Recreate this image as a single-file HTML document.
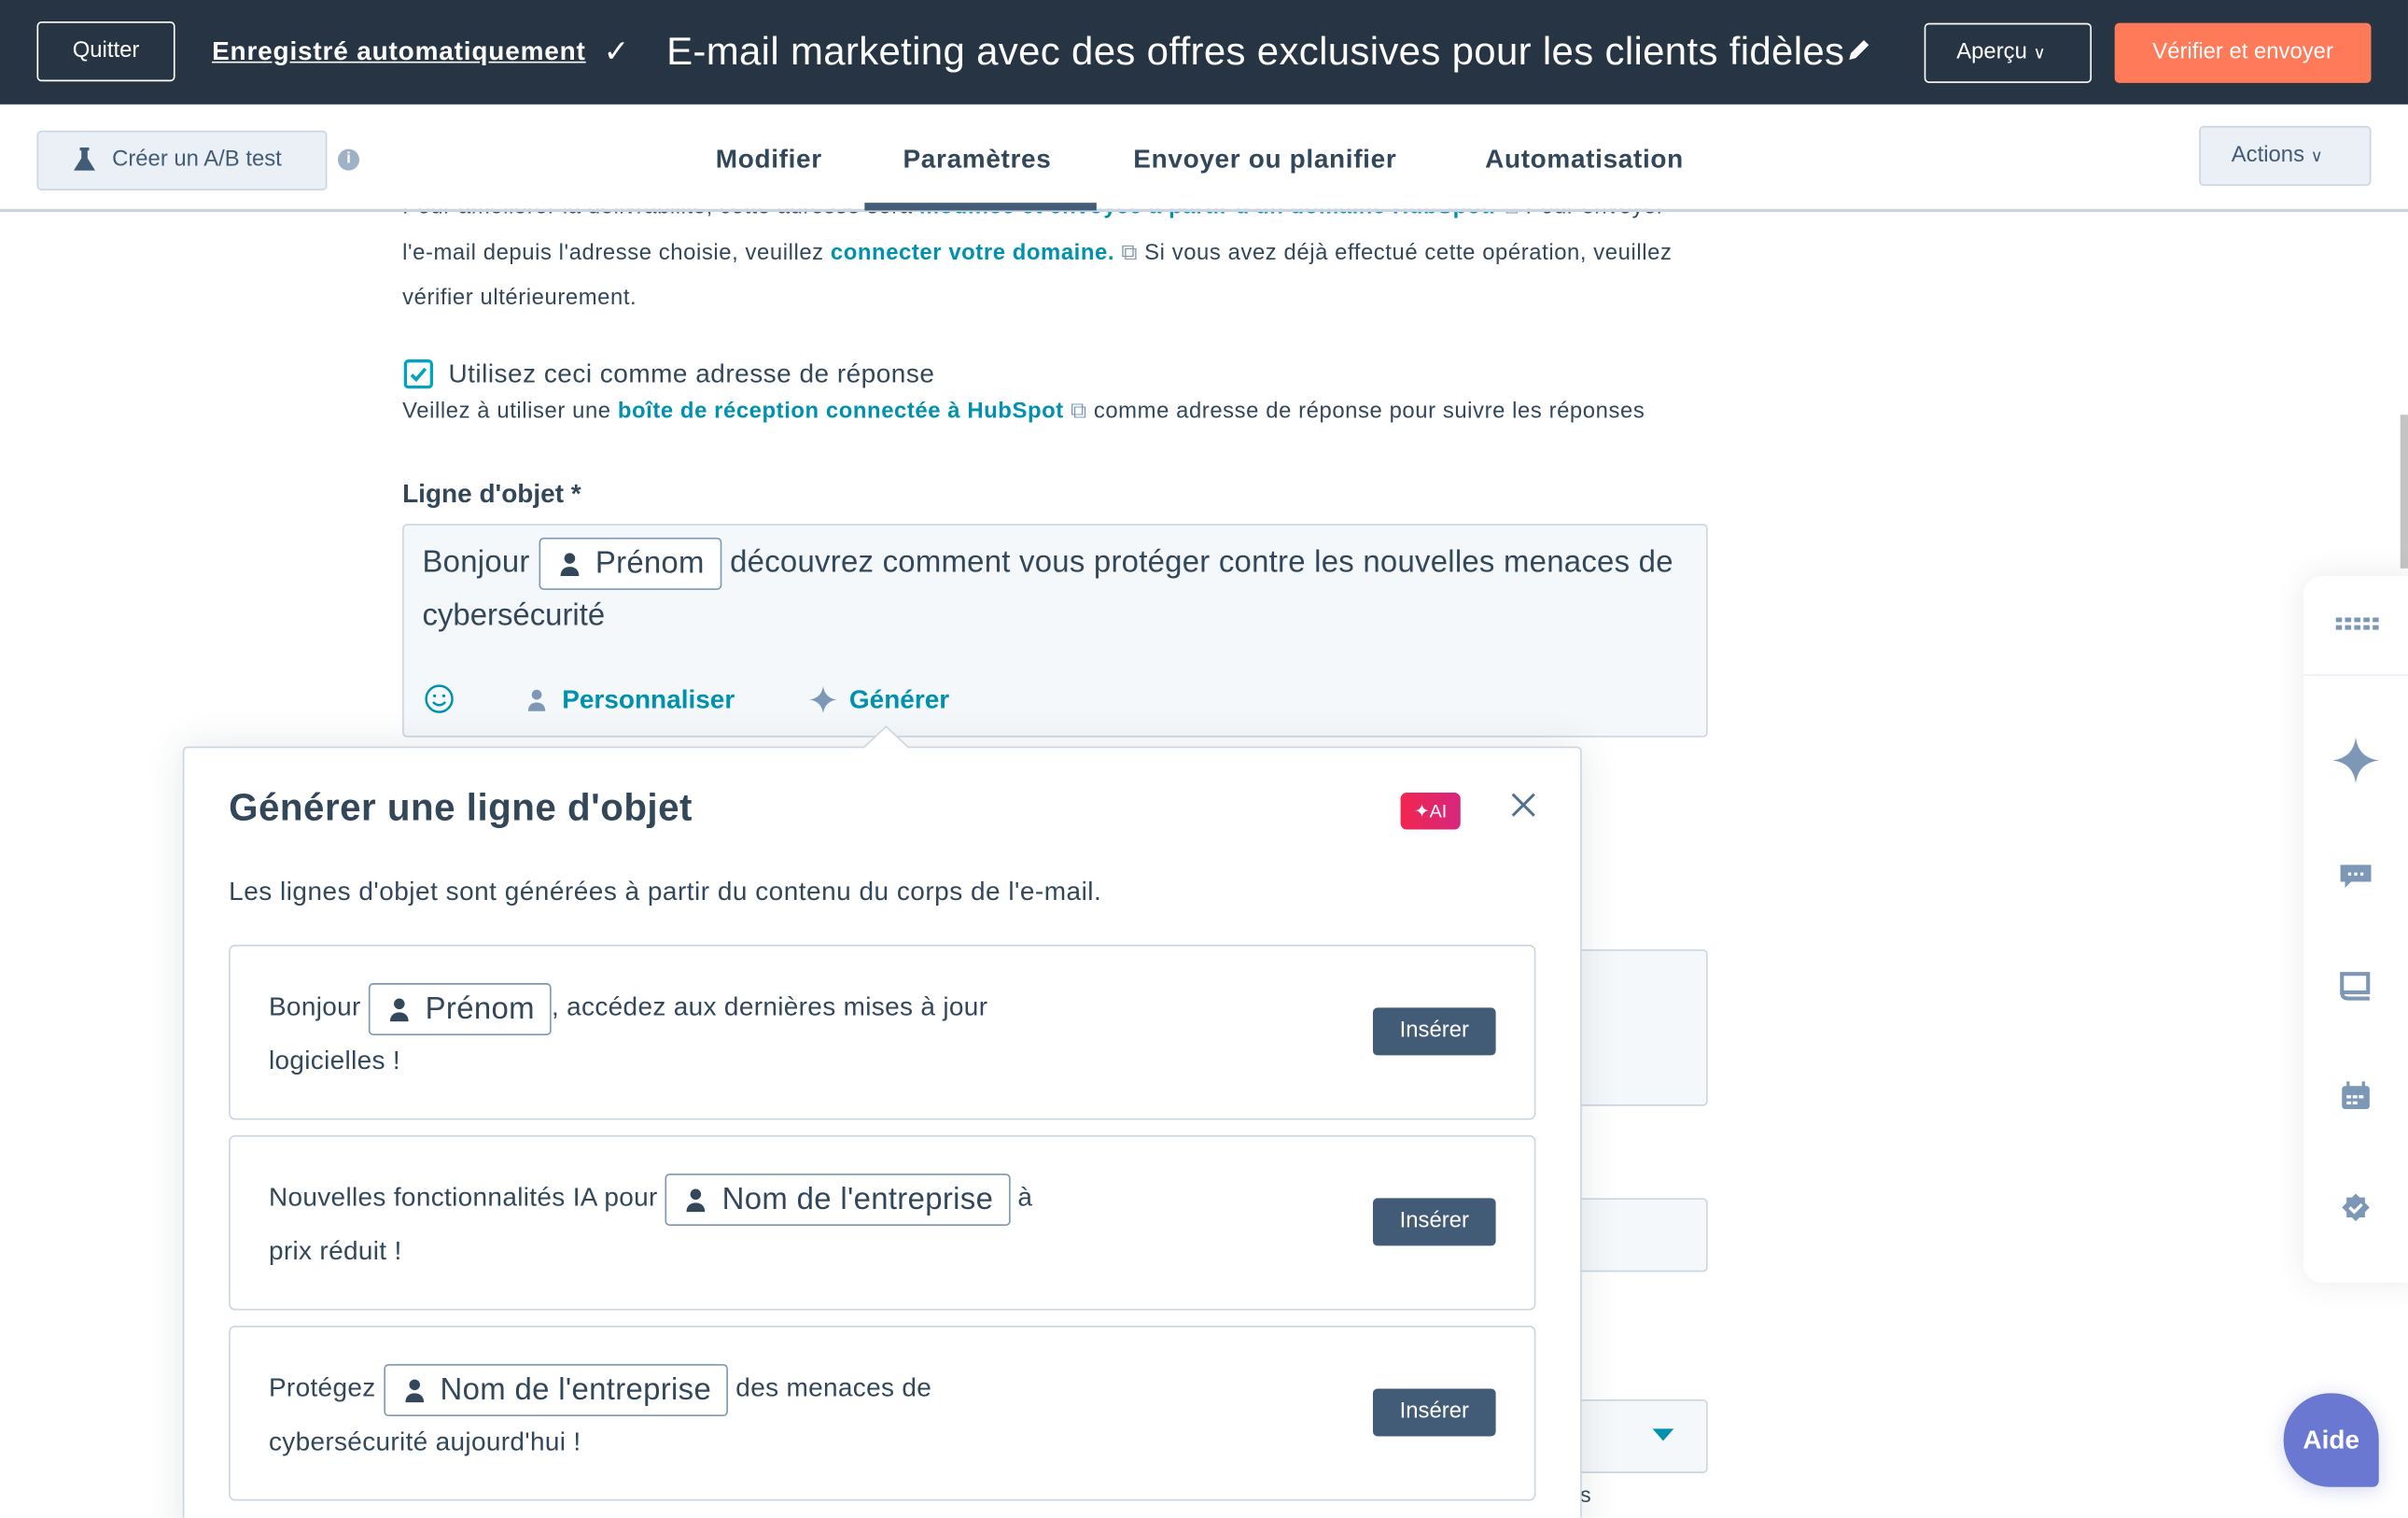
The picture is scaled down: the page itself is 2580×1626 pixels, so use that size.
<!DOCTYPE html>
<html><head><meta charset="utf-8"><style>
*{box-sizing:border-box;margin:0;padding:0}
html,body{width:2580px;height:1625px;overflow:hidden;background:#fff}
#w{position:absolute;left:0;top:0;width:1568px;height:988px;transform:scale(1.6454);transform-origin:0 0;font-family:"Liberation Sans",sans-serif;color:#33475b;overflow:hidden}
.a{position:absolute;white-space:nowrap}
.lk{color:#0091ae;font-weight:bold}
.btn{position:absolute;background:#425b76;color:#fff;font-size:14.5px;border-radius:3px;width:80px;height:31px;line-height:31px;text-align:center}
.card{position:absolute;left:149px;width:851px;height:114px;border:1px solid #cbd6e2;border-radius:4px;background:#fff}
.tok{display:inline-block;border:1px solid #7c98b6;border-radius:3px;background:#fff;padding:0 10px 0 12px;height:34px;line-height:32px;font-size:20px;vertical-align:middle}
.tok svg{vertical-align:-2px;margin-right:10px}
.ct{position:absolute;left:25px;font-size:17px;line-height:34px;width:520px;white-space:normal;letter-spacing:.2px}
.sm{font-size:14.5px;letter-spacing:.35px}
</style></head><body><div id="w">
<div class="a" style="left:0;top:0;width:1568px;height:68px;background:#273444"></div>
<div class="a" style="left:24px;top:14px;width:90px;height:39px;border:1px solid #fff;border-radius:3px;color:#fff;font-size:14.5px;text-align:center;line-height:37px">Quitter</div>
<div class="a" style="left:138px;top:24px;color:#fff;font-size:17px;font-weight:bold;text-decoration:underline;letter-spacing:.5px">Enregistré automatiquement</div>
<div class="a" style="left:393px;top:21px;color:#fff;font-size:20px">✓</div>
<div class="a" style="left:434px;top:20px;color:#fff;font-size:25.5px;letter-spacing:.2px">E-mail marketing avec des offres exclusives pour les clients fidèles</div>
<svg class="a" style="left:1202px;top:24px" width="17" height="17" viewBox="0 0 16 16"><path d="M2 14l1-4 8-8 3 3-8 8z" fill="#fff"/></svg>
<div class="a" style="left:1253px;top:15px;width:109px;height:39px;border:1px solid #fff;border-radius:3px;color:#fff;font-size:14.5px;line-height:37px;padding-left:20px">Aperçu <span style="font-size:11px">&#8744;</span></div>
<div class="a" style="left:1377px;top:15px;width:167px;height:39px;background:#ff7a59;border-radius:3px;color:#fff;font-size:14.5px;line-height:39px;text-align:center">Vérifier et envoyer</div>
<div class="a" style="left:0;top:136px;width:1568px;height:2px;background:#cbd6e2;z-index:3"></div>
<div class="a" style="left:0;top:68px;width:1568px;height:68px;background:#fff;z-index:2"></div>
<div class="a" style="z-index:3;left:24px;top:85px;width:189px;height:39px;background:#eaf0f6;border:1px solid #cbd6e2;border-radius:3px;font-size:14.5px;color:#425b76;line-height:37px;padding-left:48px">Créer un A/B test</div>
<svg class="a" style="z-index:4;left:47px;top:95px" width="16" height="17" viewBox="0 0 16 17"><path d="M5 1h6v2h-1v5l5 8H1l5-8V3H5z" fill="#425b76"/></svg>
<div class="a" style="z-index:3;left:220px;top:97px;width:14px;height:14px;border-radius:50%;background:#9fb1c5;color:#fff;font-size:10px;font-weight:bold;text-align:center;line-height:14px">i</div>
<div class="a" style="z-index:3;left:466px;top:94px;font-size:17px;font-weight:bold;letter-spacing:.4px">Modifier</div>
<div class="a" style="z-index:3;left:588px;top:94px;font-size:17px;font-weight:bold;letter-spacing:.4px">Paramètres</div>
<div class="a" style="z-index:3;left:738px;top:94px;font-size:17px;font-weight:bold;letter-spacing:.4px">Envoyer ou planifier</div>
<div class="a" style="z-index:3;left:967px;top:94px;font-size:17px;font-weight:bold;letter-spacing:.4px">Automatisation</div>
<div class="a" style="z-index:4;left:563px;top:132px;width:151px;height:5px;background:#425b76"></div>
<div class="a" style="z-index:3;left:1432px;top:82px;width:112px;height:39px;background:#eaf0f6;border:1px solid #cbd6e2;border-radius:3px;font-size:14.5px;color:#425b76;line-height:37px;padding-left:20px">Actions <span style="font-size:11px">&#8744;</span></div>
<div class="a sm" style="left:262px;top:127px">Pour améliorer la délivrabilité, cette adresse sera <span class="lk">modifiée et envoyée à partir d'un domaine HubSpot.</span> <span style="color:#7c98b6">⧉</span> Pour envoyer</div>
<div class="a sm" style="left:262px;top:157px">l'e-mail depuis l'adresse choisie, veuillez <span class="lk">connecter votre domaine.</span> <span style="color:#7c98b6">⧉</span> Si vous avez déjà effectué cette opération, veuillez</div>
<div class="a sm" style="left:262px;top:186px">vérifier ultérieurement.</div>
<div class="a" style="left:263px;top:234px;width:19px;height:19px;border:2px solid #00a4bd;border-radius:3px"></div>
<svg class="a" style="left:266px;top:237px" width="13" height="13" viewBox="0 0 13 13"><path d="M2 7l3 3 6-7" stroke="#00a4bd" stroke-width="2.2" fill="none"/></svg>
<div class="a" style="left:292px;top:234px;font-size:17px;letter-spacing:.3px">Utilisez ceci comme adresse de réponse</div>
<div class="a sm" style="left:262px;top:260px">Veillez à utiliser une <span class="lk">boîte de réception connectée à HubSpot</span> <span style="color:#7c98b6">⧉</span> comme adresse de réponse pour suivre les réponses</div>
<div class="a" style="left:262px;top:312px;font-size:17px;font-weight:bold">Ligne d'objet *</div>
<div class="a" style="left:262px;top:341px;width:850px;height:139px;background:#f5f8fa;border:1px solid #cbd6e2;border-radius:3px"></div>
<div class="a" style="left:275px;top:350px;font-size:20px;letter-spacing:.15px">Bonjour <span class="tok"><svg width="14" height="16" viewBox="0 0 14 16"><circle cx="7" cy="4.5" r="3.5" fill="#33475b"/><path d="M1 16c0-4 2.5-6 6-6s6 2 6 6z" fill="#33475b"/></svg>Prénom</span> découvrez comment vous protéger contre les nouvelles menaces de</div>
<div class="a" style="left:275px;top:390px;font-size:20px">cybersécurité</div>
<svg class="a" style="left:276px;top:445px" width="20" height="20" viewBox="0 0 20 20"><circle cx="10" cy="10" r="8.5" stroke="#0091ae" stroke-width="1.5" fill="none"/><circle cx="7" cy="8" r="1" fill="#0091ae"/><circle cx="13" cy="8" r="1" fill="#0091ae"/><path d="M6 12q4 4 8 0" stroke="#0091ae" stroke-width="1.5" fill="none"/></svg>
<svg class="a" style="left:343px;top:447px" width="13" height="17" viewBox="0 0 14 16"><circle cx="7" cy="4.5" r="3.5" fill="#7c98b6"/><path d="M1 16c0-4 2.5-6 6-6s6 2 6 6z" fill="#7c98b6"/></svg>
<div class="a lk" style="left:366px;top:446px;font-size:17px">Personnaliser</div>
<svg class="a" style="left:527px;top:446px" width="18" height="19" viewBox="0 0 18 18"><path d="M9 0Q10 8 18 9Q10 10 9 18Q8 10 0 9Q8 8 9 0z" fill="#7c98b6"/></svg>
<div class="a lk" style="left:553px;top:446px;font-size:17px">Générer</div>
<div class="a" style="left:1000px;top:618px;width:112px;height:102px;background:#f5f8fa;border:1px solid #cbd6e2;border-radius:3px"></div>
<div class="a" style="left:1000px;top:780px;width:112px;height:48px;background:#f5f8fa;border:1px solid #cbd6e2;border-radius:3px"></div>
<div class="a" style="left:1000px;top:911px;width:112px;height:48px;background:#f5f8fa;border:1px solid #cbd6e2;border-radius:3px"></div>
<svg class="a" style="left:1076px;top:930px" width="14" height="9"><path d="M0 0h14L7 8z" fill="#0091ae"/></svg>
<div class="a" style="left:1029px;top:965px;font-size:14px">s</div>
<div class="a" style="left:119px;top:486px;width:911px;height:520px;background:#fff;border:1px solid #cbd6e2;border-radius:3px;box-shadow:0 0 25px rgba(45,62,80,.12)"></div>
<svg class="a" style="left:562px;top:472px" width="30" height="16"><path d="M0 15L15 1L30 15" fill="#fff" stroke="#cbd6e2"/><rect x="0" y="15" width="30" height="2" fill="#fff"/></svg>
<div class="a" style="left:149px;top:513px;font-size:24.5px;font-weight:bold;letter-spacing:.3px">Générer une ligne d'objet</div>
<div class="a" style="left:912px;top:516px;width:39px;height:24px;border-radius:4px;background:linear-gradient(90deg,#f2254f,#d6277e);color:#fff;font-size:12px;text-align:center;line-height:24px">✦AI</div>
<svg class="a" style="left:984px;top:516px" width="16" height="16"><path d="M1 1L15 15M15 1L1 15" stroke="#516f90" stroke-width="1.8"/></svg>
<div class="a" style="left:149px;top:571px;font-size:17px;letter-spacing:.3px">Les lignes d'objet sont générées à partir du contenu du corps de l'e-mail.</div>
<div class="card" style="top:615px"><div class="ct" style="top:23px">Bonjour <span class="tok"><svg width="14" height="16" viewBox="0 0 14 16"><circle cx="7" cy="4.5" r="3.5" fill="#33475b"/><path d="M1 16c0-4 2.5-6 6-6s6 2 6 6z" fill="#33475b"/></svg>Prénom</span>, accédez aux dernières mises à jour logicielles !</div><div class="btn" style="left:744px;top:40px">Insérer</div></div>
<div class="card" style="top:739px"><div class="ct" style="top:23px;width:525px">Nouvelles fonctionnalités IA pour <span class="tok"><svg width="14" height="16" viewBox="0 0 14 16"><circle cx="7" cy="4.5" r="3.5" fill="#33475b"/><path d="M1 16c0-4 2.5-6 6-6s6 2 6 6z" fill="#33475b"/></svg>Nom de l'entreprise</span> à<br>prix réduit !</div><div class="btn" style="left:744px;top:40px">Insérer</div></div>
<div class="card" style="top:863px"><div class="ct" style="top:23px">Protégez <span class="tok"><svg width="14" height="16" viewBox="0 0 14 16"><circle cx="7" cy="4.5" r="3.5" fill="#33475b"/><path d="M1 16c0-4 2.5-6 6-6s6 2 6 6z" fill="#33475b"/></svg>Nom de l'entreprise</span> des menaces de cybersécurité aujourd'hui !</div><div class="btn" style="left:744px;top:40px">Insérer</div></div>
<div class="a" style="left:1563px;top:270px;width:5px;height:100px;background:#c4c4c4"></div>
<div class="a" style="left:1500px;top:375px;width:80px;height:460px;background:#fff;border-radius:12px;box-shadow:0 0 20px rgba(45,62,80,.1)"></div>
<div class="a" style="left:1500px;top:439px;width:68px;height:1px;background:#eaf0f6"></div>
<svg class="a" style="left:1521px;top:402px" width="28" height="10"><g fill="#7c98b6"><rect x="0" y="0" width="4" height="3"/><rect x="6" y="0" width="4" height="3"/><rect x="12" y="0" width="4" height="3"/><rect x="18" y="0" width="4" height="3"/><rect x="24" y="0" width="4" height="3"/><rect x="0" y="5" width="4" height="3"/><rect x="6" y="5" width="4" height="3"/><rect x="12" y="5" width="4" height="3"/><rect x="18" y="5" width="4" height="3"/><rect x="24" y="5" width="4" height="3"/></g></svg>
<svg class="a" style="left:1519px;top:480px" width="30" height="30" viewBox="0 0 18 18"><path d="M9 0Q10 8 18 9Q10 10 9 18Q8 10 0 9Q8 8 9 0z" fill="#7c98b6"/></svg>
<svg class="a" style="left:1523px;top:562px" width="22" height="18"><path d="M1 1h20v11H8l-4 4v-4H1z" fill="#7c98b6"/><g fill="#fff"><rect x="6" y="6" width="2" height="2"/><rect x="10" y="6" width="2" height="2"/><rect x="14" y="6" width="2" height="2"/></g></svg>
<svg class="a" style="left:1523px;top:632px" width="22" height="20"><path d="M2 2h17v12H2z M2 14q0 4 4 4h14" fill="none" stroke="#7c98b6" stroke-width="2.5"/></svg>
<svg class="a" style="left:1524px;top:703px" width="20" height="20"><rect x="1" y="4" width="18" height="15" rx="2" fill="#7c98b6"/><rect x="4" y="1" width="2" height="4" fill="#7c98b6"/><rect x="14" y="1" width="2" height="4" fill="#7c98b6"/><g fill="#fff"><rect x="4" y="10" width="3" height="2"/><rect x="8" y="10" width="3" height="2"/><rect x="12" y="10" width="3" height="2"/><rect x="4" y="14" width="3" height="2"/><rect x="8" y="14" width="3" height="2"/></g></svg>
<svg class="a" style="left:1524px;top:776px" width="20" height="20" viewBox="0 0 20 20"><path d="M10 1l2.5 2.5H16v3.5L19 10l-3 3v3.5h-3.5L10 19l-2.5-2.5H4V13L1 10l3-3V3.5h3.5z" fill="#7c98b6"/><path d="M6 10l3 3 5-5" stroke="#fff" stroke-width="2" fill="none"/></svg>
<div class="a" style="left:1487px;top:907px;width:62px;height:61px;background:#6a78d1;border-radius:30px 30px 4px 30px;color:#fff;font-size:17px;font-weight:bold;text-align:center;line-height:61px;box-shadow:0 2px 12px rgba(106,120,209,.3)">Aide</div>
</div></body></html>
